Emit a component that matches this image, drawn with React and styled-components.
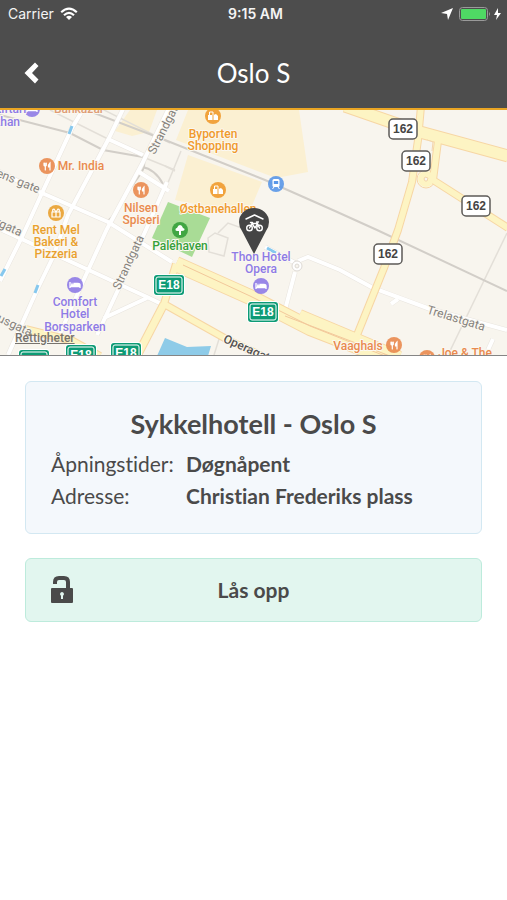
import React from "react";
import styled, { createGlobalStyle } from "styled-components";

const GlobalStyle = createGlobalStyle`
  * { box-sizing: border-box; }
  body {
    margin: 0;
    background: #fff;
    color: #4a4a4a;
    font-family: Lato, sans-serif;
    font-variant-ligatures: none;
  }
`;

const Header = styled.header`
  background: #4d4d4d;
  color: #fff;
  border-bottom: 2px solid #e9a524;
`;

const StatusBar = styled.div`
  display: grid;
  grid-template-columns: 1fr auto 1fr;
  align-items: center;
  height: 28px;
  padding: 0 4px 0 8px;
  font: 500 14px/16px Roboto, sans-serif;
  color: #f4f4f4;
`;

const StatusGroup = styled.div`
  display: flex;
  align-items: center;
  gap: ${(p) => (p.$end ? "4px" : "6px")};
  justify-content: ${(p) => (p.$end ? "flex-end" : "flex-start")};
  font: 400 14px/16px Inter, sans-serif;
`;

const Clock = styled.time`
  font: 600 14px/16px Inter, sans-serif;
`;

const NavBar = styled.nav`
  display: grid;
  grid-template-columns: 64px 1fr 64px;
  align-items: center;
  height: 80px;
`;

const BackButton = styled.button`
  display: flex;
  align-items: center;
  height: 64px;
  padding: 0 0 0 24px;
  margin-top: 9px;
  border: 0;
  background: none;
  color: #fff;
  cursor: pointer;
`;

const Title = styled.h1`
  margin: 10px 0 0;
  text-align: center;
  font-size: 26px;
  font-weight: 400;
  line-height: 32px;
`;

const MapFrame = styled.section`
  position: relative;
  height: 246px;
  overflow: hidden;
  border-bottom: 1px solid #858585;
  background: #f8f5ee;
`;

const MapCanvas = styled.svg`
  display: block;
  width: 100%;
  height: 100%;
`;

const LegalLink = styled.a`
  position: absolute;
  left: 15px;
  bottom: 10px;
  font: 500 12px/14px Roboto, sans-serif;
  color: #77736d;
  text-decoration: underline;
`;

const Content = styled.main`
  display: flex;
  flex-direction: column;
  gap: 24px;
  padding: 25px;
`;

const InfoCard = styled.section`
  padding: 26px 24px 21px;
  border: 1px solid #d3e8f2;
  border-radius: 6px;
  background: #f4f8fc;
`;

const CardTitle = styled.h2`
  margin: 0 0 8px;
  text-align: center;
  font-size: 27px;
  font-weight: 700;
  line-height: 32px;
`;

const Details = styled.dl`
  display: grid;
  grid-template-columns: 135px 1fr;
  margin: 0 1px;
  font-size: 21px;
  line-height: 32px;
`;

const Term = styled.dt``;

const Value = styled.dd`
  margin: 0;
  font-weight: 700;
`;

const UnlockButton = styled.button`
  display: grid;
  grid-template-columns: 24px 1fr 24px;
  align-items: center;
  width: 100%;
  height: 64px;
  padding: 0 24px;
  border: 1px solid #bdebdc;
  border-radius: 6px;
  background: #e2f6ef;
  color: #4a4a4a;
  font: 700 21px/32px Lato, sans-serif;
  cursor: pointer;
`;

const MapLabel = styled.text`
  font-family: Roboto, sans-serif;
  font-size: ${(p) => p.$size || 12}px;
  font-weight: ${(p) => p.$weight || 500};
  fill: ${(p) => p.$color};
  text-anchor: middle;
  paint-order: stroke;
  stroke: #fbf8f1;
  stroke-width: 2px;
  stroke-linejoin: round;
`;

const ShieldText = styled.text`
  font-family: "Liberation Sans", sans-serif;
  font-size: 12px;
  font-weight: 700;
  text-anchor: middle;
  fill: ${(p) => p.$color};
`;

const ORANGE = "#e98a4e";
const AMBER = "#e9a02e";
const SHOP = "#f09a2c";
const PURPLE = "#8e7be6";
const GREEN = "#35a03a";
const GREY = "#85827d";

const labels = [
  ["khan", 7, 126, PURPLE], ["Kiftari", 10, 113, PURPLE], ["Bankazar", 79, 113, "#df9d75"],
  ["Mr. India", 81, 170, ORANGE],
  ["Nilsen", 141, 212, ORANGE], ["Spiseri", 141, 224, ORANGE],
  ["Rent Mel", 56, 234, AMBER], ["Bakeri &", 56, 246, AMBER], ["Pizzeria", 56, 258, AMBER],
  ["Comfort", 75, 306, PURPLE], ["Hotel", 75, 318, PURPLE], ["Borsparken", 75, 331, PURPLE],
  ["Byporten", 213, 138, SHOP], ["Shopping", 213, 150, SHOP], ["Østbanehallen", 218, 213, SHOP],
  ["Paléhaven", 180, 250, GREEN],
  ["Thon Hotel", 261, 261, PURPLE], ["Opera", 261, 273, PURPLE],
  ["Vaaghals", 358, 350, ORANGE], ["Joe & The", 465, 357, ORANGE],
];

const streets = [
  ["tens gate", 15, 184, 22], ["Skippergata", -9, 223, 25], ["Strandgata", 168, 129, -63],
  ["Strandgata", 132, 264, -65], ["Rådhusgata", 1, 323, 25], ["Trelastgata", 455, 322, 17],
];

const whiteRoads = [
  "M84 108L72 128L42 193L22 237L0 281", "M125 105L108 140L68 215L53 257L37 290L8 355",
  "M169 108L142 164L107 229L85 277L58 338", "M167 182L145 232L97 335",
  "M-2 171L42 193L108 222L172 262", "M0 229L67 260L147 297L172 309",
  "M139 172L169 191", "M104 318L147 298", "M108 139L143 155",
  "M285 310L295 272", "M298 261L308 257L340 270L373 288L430 309L507 330",
  "M398 299L391 304", "M265 247L297 264", "M493 339L488 350",
];

const thinRoads = [
  "M50 110L108 139L143 157L175 170", "M100 108L170 143", "M507 233L448 355",
  "M181 151L165 190L140 246", "M165 166L175 171", "M208 238l7-5 13 5-4 18-15-4z",
  "M218 233l10-10 22 8", "M220 336l-6 19",
];

const rails = [
  "M0 115L70 133L103 150L143 157", "M68 103L165 140L265 180L335 211L377 230L507 291",
  "M143 157C150 174 128 181 118 211L107 222", "M142 167Q155 169 163 184",
];

const yellowRoads = [
  ["M345 106L420 132L508 156", 11], ["M421 106L418 140L412 182L398 230L384 268L355 340", 6],
  ["M438 141L433 180L508 228", 6], ["M164 304L137 356", 7],
  ["M176 264L164 304L228 340L262 356", 6], ["M176 264L250 297L310 328L382 356", 14],
  ["M300 314L400 356", 8], ["M330 333L357 342L400 353", 4], ["M25 329L73 341L100 356", 6],
];

const shields162 = [[403, 129], [416, 161], [476, 206], [388, 254]];
const shieldsE18 = [[169, 286], [263, 313], [34, 361], [81, 356], [126, 354]];

const Fork = () => (
  <g stroke="#fff" strokeWidth="1.2" fill="none" strokeLinecap="round">
    <path d="M-3-3v2q0 1 1.3 1V4M-.7-3v2q0 1-1.3 1M-2-3v2" />
    <path d="M3 4V-3Q1-1 1.5 1H3" fill="#fff" />
  </g>
);
const Bed = () => (
  <path d="M-5-3v6M-5 1.5H5V3M-4 0H5Q5-1.5 3-1.5H-1V0M-3.5-1.5h1" stroke="#fff" strokeWidth="1.3" fill="none" />
);
const Bag = () => (
  <g fill="#fff">
    <path d="M-5-1H-.5V4H-5zM.5-1L3-2L5 0V4H.5z" />
    <path d="M-3.500-1V-4H0V-1" fill="none" stroke="#fff" />
  </g>
);
const Gift = () => (
  <path d="M-4-1H4V4H-4zM-3-1Q-4-4-2-4L0-1 2-4Q4-4 3-1M0-1V4" stroke="#fff" fill="none" strokeWidth="1.2" />
);
const Train = () => (
  <g>
    <rect x="-3.5" y="-5" width="7" height="8" rx="1.5" fill="#fff" />
    <rect x="-2.2" y="-3" width="4.4" height="3" fill="#5997e8" />
    <path d="M-2 3l-1.5 2M2 3l1.5 2" stroke="#fff" />
  </g>
);
const Tree = () => (
  <path d="M-1 5V1H-3Q-5 1-4.5-1Q-4-2-3-2Q-2-5 0-5Q2-5 3-2Q5-1.5 4.5 0Q4 1 1 1V5z" fill="#fff" />
);

const pois = [
  [47, 166, ORANGE, Fork], [141, 190, ORANGE, Fork], [394, 345, ORANGE, Fork], [427, 358, ORANGE, Fork],
  [56, 213, AMBER, Gift], [75, 285, PURPLE, Bed], [261, 286, PURPLE, Bed], [32, 109, PURPLE, Bed],
  [213, 116, SHOP, Bag], [218, 190, SHOP, Bag], [276, 184, "#5997e8", Train], [180, 230, GREEN, Tree],
];

function StreetMap() {
  return (
    <MapCanvas viewBox="0 110 507 245" preserveAspectRatio="xMidYMid slice" role="img" aria-label="Kart over Oslo S">
      <g fill="#fbf0d2">
        <path d="M188 110H299L308 172L276 178L176 140z" />
        <path d="M188 155L262 182L248 215L175 200z" />
        <path d="M130 110H157L149 132L132 136L115 131z" />
      </g>
      <path d="M168 202L210 218L192 257L152 238z" fill="#a9dc96" />
      <path d="M157 356L165 338L187 347L211 346L208 356z" fill="#8ecbe8" />
      <g fill="none" stroke="#e3dfd8" strokeWidth="1.5">{thinRoads.map((d) => <path key={d} d={d} />)}</g>
      <g fill="none" stroke="#d2cec8" strokeWidth="2">{rails.map((d) => <path key={d} d={d} />)}</g>
      <g fill="none" stroke="#e9e5df" strokeWidth="5">{whiteRoads.map((d) => <path key={d} d={d} />)}</g>
      <g fill="none" stroke="#fff" strokeWidth="4">{whiteRoads.map((d) => <path key={d} d={d} />)}</g>
      <circle cx="297" cy="266" r="5" fill="#fff" stroke="#dedad5" />
      <circle cx="297" cy="266" r="2" fill="#f8f5ee" stroke="#dedad5" />
      <g fill="none" stroke="#f7d6a4" strokeLinejoin="round">
        {yellowRoads.map(([d, w]) => <path key={d} d={d} strokeWidth={w + 2} />)}
        <circle cx="426" cy="179" r="9" />
      </g>
      <circle cx="426" cy="179" r="8" fill="#fdf4c3" />
      <g fill="none" stroke="#fdf4c3" strokeLinejoin="round">
        {yellowRoads.map(([d, w]) => <path key={d} d={d} strokeWidth={w} />)}
      </g>
      <path d="M424 179l1-2 3 1-1 3-2 0zM427 140l6 2-1 9" fill="#f8f5ee" stroke="#f3d6ac" />
      <path d="M183 265L250 296L310 326L385 356M285 316L390 356" fill="none" stroke="#f2c89b" strokeWidth="1" />
      <path d="M72 126l-3 8M38 285l-3 8M5 269l-4 7M267 248l9 5" stroke="#86c8ee" strokeWidth="3" />
      {streets.map(([name, x, y, angle]) => (
        <MapLabel key={`${name}${y}`} $color={GREY} $weight={400} transform={`translate(${x} ${y}) rotate(${angle})`}>{name}</MapLabel>
      ))}
      <MapLabel $color="#55524f" transform="translate(248 353) rotate(24)">Operagata</MapLabel>
      {pois.map(([x, y, color, Glyph]) => (
        <g key={`${x}-${y}`} transform={`translate(${x} ${y})`}>
          <circle r="8" fill={color} fillOpacity=".9" />
          <Glyph />
        </g>
      ))}
      {labels.map(([name, x, y, color]) => (
        <MapLabel key={name} x={x} y={y} $color={color}>{name}</MapLabel>
      ))}
      {shields162.map(([x, y]) => (
        <g key={x} transform={`translate(${x} ${y})`}>
          <rect x="-14" y="-10" width="28" height="20" rx="4" fill="#fff" stroke="#5c5a57" strokeWidth="1.5" />
          <ShieldText y="4" $color="#444">162</ShieldText>
        </g>
      ))}
      {shieldsE18.map(([x, y]) => (
        <g key={x} transform={`translate(${x} ${y})`}>
          <rect x="-16" y="-12" width="32" height="22" rx="4" fill="#fff" />
          <rect x="-15" y="-11" width="30" height="20" rx="3" fill="#0d9b75" />
          <rect x="-13" y="-9" width="26" height="16" rx="2" fill="none" stroke="#fff" />
          <ShieldText y="3" $color="#fff">E18</ShieldText>
        </g>
      ))}
      <path d="M254 254L242 231Q239 227 239 222A15 14 0 0 1 269 222Q269 227 266 231z" fill="#454545" />
      <g fill="none" stroke="#fff" strokeWidth="1.4" strokeLinecap="round" strokeLinejoin="round">
        <path d="M246 219L254.500 215L263 219" />
        <circle cx="249.500" cy="228" r="2.800" />
        <circle cx="259.500" cy="228" r="2.800" />
        <path d="M249.500 228L252 223.500H257.500L259.500 228M252 223.500L255 228L257.500 223.500M250.500 222.500h2M256.500 222h2" />
      </g>
    </MapCanvas>
  );
}

export default function App() {
  return (
    <>
      <GlobalStyle />
      <Header>
        <StatusBar>
          <StatusGroup>
            <span>Carrier</span>
            <svg width="18" height="14" viewBox="0 0 18 14" aria-label="Wi-Fi">
              <g fill="none" stroke="#fff" strokeWidth="2.200">
                <path d="M1.200 5.200Q9-2 16.800 5.200" />
                <path d="M4 8.200Q9 3.600 14 8.200" />
              </g>
              <path d="M6 10Q9 7.400 12 10L9 13z" fill="#fff" />
            </svg>
          </StatusGroup>
          <Clock>9:15 AM</Clock>
          <StatusGroup $end>
            <svg width="12" height="12" viewBox="0 0 12 12" aria-hidden="true">
              <path d="M12 0L7 12L6 6L0 5z" fill="#fff" />
            </svg>
            <svg width="46" height="16" viewBox="0 0 46 16" aria-label="Batteri lader">
              <rect x="2.500" y="1.500" width="28" height="13" rx="3" fill="none" stroke="#9a9a9a" />
              <rect x="4" y="3" width="25" height="10" rx="1" fill="#4fd964" />
              <path d="M32 6q2 2 0 4z" fill="#9a9a9a" />
              <path d="M41 2L37 9H40L39 14L44 7H41z" fill="#fff" />
            </svg>
          </StatusGroup>
        </StatusBar>
        <NavBar>
          <BackButton aria-label="Tilbake">
            <svg width="16" height="22" viewBox="0 0 16 22" aria-hidden="true">
              <path d="M11 0.500L14.500 4L8 11L14.500 17.500L11 21.500L0.500 11z" fill="#fff" />
            </svg>
          </BackButton>
          <Title>Oslo S</Title>
        </NavBar>
      </Header>
      <MapFrame>
        <StreetMap />
        <LegalLink href="#rettigheter">Rettigheter</LegalLink>
      </MapFrame>
      <Content>
        <InfoCard>
          <CardTitle>Sykkelhotell - Oslo S</CardTitle>
          <Details>
            <Term>Åpningstider:</Term>
            <Value>Døgnåpent</Value>
            <Term>Adresse:</Term>
            <Value>Christian Frederiks plass</Value>
          </Details>
        </InfoCard>
        <UnlockButton>
          <svg width="24" height="28" viewBox="0 0 24 28" aria-hidden="true">
            <path d="M5 8V6Q5 2 9 2H14Q18 2 18 6V14" fill="none" stroke="#4a4a4a" strokeWidth="4" />
            <path fillRule="evenodd" d="M2 12H22Q23 12 23 13V26Q23 27 22 27H2Q1 27 1 26V13Q1 12 2 12zM12 16A2 2 0 0 0 11 19.700V23H13V19.700A2 2 0 0 0 12 16z" fill="#4a4a4a" />
          </svg>
          <span>Lås opp</span>
        </UnlockButton>
      </Content>
    </>
  );
}
